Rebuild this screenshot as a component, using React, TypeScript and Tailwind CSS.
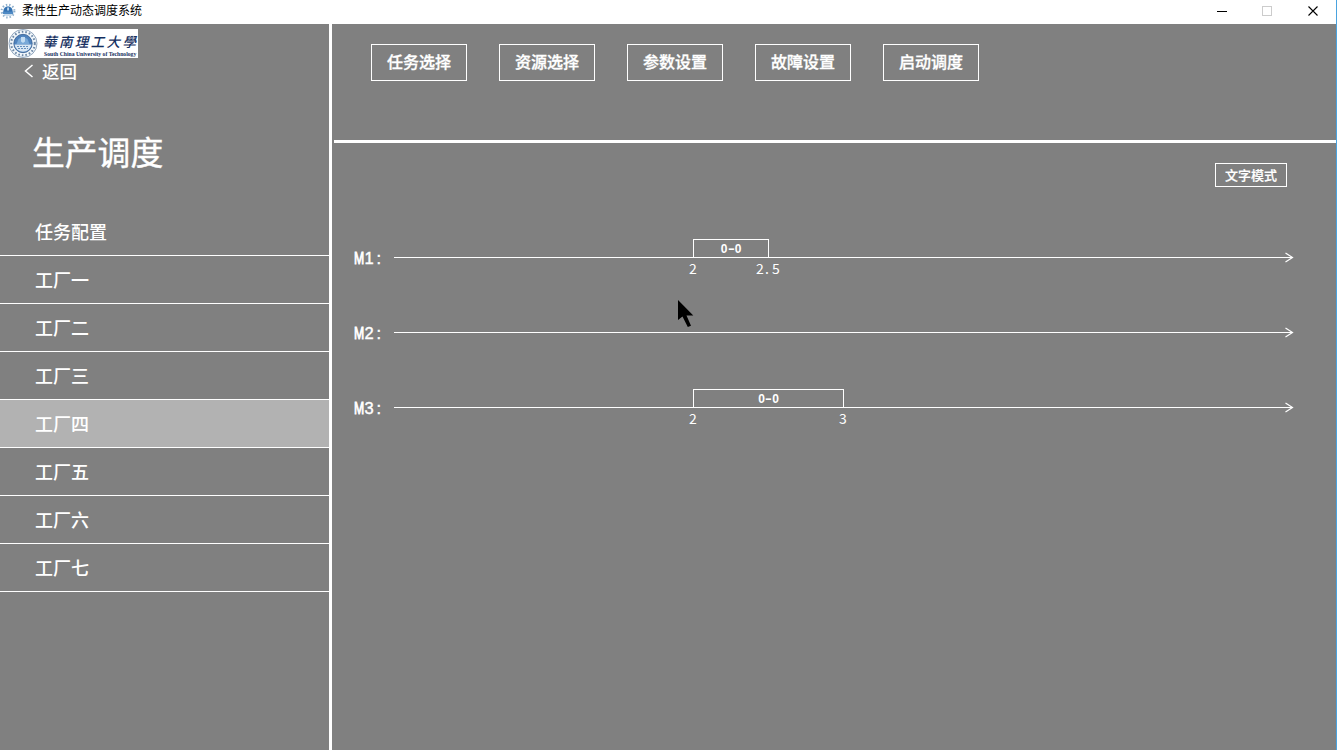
import React from "react";

const factories = ["任务配置", "工厂一", "工厂二", "工厂三", "工厂四", "工厂五", "工厂六", "工厂七"];
const actions = ["任务选择", "资源选择", "参数设置", "故障设置", "启动调度"];

type Job = { label: string; start: string; end: string; startX: number; width: number };
const machines: { name: string; job?: Job }[] = [
  { name: "M1", job: { label: "0-0", start: "2", end: "2.5", startX: 299, width: 76 } },
  { name: "M2" },
  { name: "M3", job: { label: "0-0", start: "2", end: "3", startX: 299, width: 151 } },
];

function AppIcon() {
  return (
    <svg width="16" height="16" viewBox="0 0 16 16" className="shrink-0">
      <circle cx="8" cy="8" r="6.4" fill="none" stroke="#8fb0cc" strokeWidth="2" strokeDasharray="1.4 2" />
      <circle cx="8" cy="8" r="5" fill="#e6f0f8" />
      <path d="M3.4 9C3.4 5 5.5 3.6 8 3.6S12.6 5 12.6 9z" fill="#3472b2" />
      <path d="M7.3 4.6h1.5v3H7.3z" fill="#dcecf8" />
      <path d="M2.8 8.6h10.4v2.4H2.8z" fill="#4f8ac4" />
      <path d="M4 12h8" stroke="#a9c4dc" />
    </svg>
  );
}

function Logo() {
  return (
    <div className="flex h-[29px] w-[130px] overflow-hidden bg-white text-[#152f60]">
      <svg width="31" height="29" viewBox="0 0 31 29" className="shrink-0">
        <circle cx="15" cy="14.5" r="14" fill="#f1f6fa" stroke="#7892ad" strokeWidth="0.8" />
        <circle cx="15" cy="14.5" r="11.8" fill="none" stroke="#6c87a5" strokeWidth="2" strokeDasharray="1.6 2" />
        <circle cx="15" cy="14.5" r="9.2" fill="#4f83bd" stroke="#355d91" strokeWidth="0.8" />
        <path d="M6.5 15.5h17a8.6 8.6 0 0 1-17 0z" fill="#d9e7f4" />
        <path d="M8.5 15l2-5 4.5-2.5 4.5 2.5 2 5z" fill="#79a9d8" />
        <path d="M13 8h4v4.5l-2 1.5-2-1.5z" fill="#c3dcf2" />
        <path d="M9 17.5h12M10 19.5h10" stroke="#658fbd" strokeDasharray="2 1" />
      </svg>
      <div className="flex w-[99px] flex-col pl-[4px]">
        <div className="flex h-[22px] items-center justify-between pr-[2px] pt-[1px] font-['Noto_Sans_CJK_TC',sans-serif] text-[13.5px] font-medium italic leading-[18px]">
          <span>華</span><span>南</span><span>理</span><span>工</span><span>大</span><span>學</span>
        </div>
        <div className="h-[7px] whitespace-nowrap pl-px font-['Liberation_Serif',serif] text-[5.7px] font-bold leading-[7px]">
          South China University of Technology
        </div>
      </div>
    </div>
  );
}

function TitleBar() {
  return (
    <header className="flex h-6 shrink-0 items-center justify-between bg-white">
      <div className="flex items-center gap-[6px] pb-[3px] text-xs leading-5 text-black">
        <AppIcon />
        <span className="-mt-px">柔性生产动态调度系统</span>
      </div>
      <svg width="136" height="24" viewBox="0 0 136 24" fill="none" shapeRendering="crispEdges">
        <path d="M17 11.5h10" stroke="#000" />
        <path d="M62.5 6.5h9v9h-9z" stroke="#ccc" />
        <path d="M108.5 6.5l9 9M117.5 6.5l-9 9" stroke="#000" strokeWidth="1.1" shapeRendering="auto" />
      </svg>
    </header>
  );
}

function Sidebar() {
  return (
    <aside className="flex w-[332px] shrink-0 flex-col border-r-[3px] border-white">
      <div className="flex h-[34px] pl-2 pt-[5px]">
        <Logo />
      </div>
      <button className="flex h-7 items-center gap-2 pb-[2px] pl-6 text-left text-[17.5px] font-medium leading-[26px]">
        <svg width="10" height="14" viewBox="0 0 10 14" fill="none" stroke="white" strokeWidth="1.5">
          <path d="M8.5 1L1.5 7l7 6" />
        </svg>
        <span>返回</span>
      </button>
      <h1 className="flex h-[122px] items-center pl-8 pt-[7px] text-[32.8px] font-normal [-webkit-text-stroke:0.4px_white]">
        生产调度
      </h1>
      <nav>
        {factories.map((name) => (
          <div
            key={name}
            className={
              name === "工厂四"
                ? "flex h-12 items-center border-b border-white bg-[#b2b2b2] pb-px pl-[35px] text-[18px] font-medium"
                : "flex h-12 items-center border-b border-white pb-px pl-[35px] text-[18px] font-medium"
            }
          >
            {name}
          </div>
        ))}
      </nav>
    </aside>
  );
}

function TimeMark({ value }: { value: string }) {
  return (
    <span className="flex font-['Noto_Sans_CJK_SC',sans-serif] text-[14px] font-normal leading-[20px]">
      {value.split("").map((c, i) => (
        <span key={i} className={c === "." ? "w-2 pl-[1px]" : "w-2 text-center"}>
          {c}
        </span>
      ))}
    </span>
  );
}

function Timeline({ name, job }: { name: string; job?: Job }) {
  return (
    <div className="flex h-[75px] items-start">
      <div className="flex w-10 shrink-0 pt-[7px] font-['Liberation_Sans',sans-serif] text-[16.5px] leading-6 [-webkit-text-stroke:0.4px_white]">
        <span className="w-[10.5px] origin-left scale-x-[0.74] [-webkit-text-stroke:0.9px_white]">{name[0]}</span>
        <span className="w-[10px]">{name[1]}</span>
        <span className="w-[9px] pl-[2px]">:</span>
      </div>
      <div className="relative h-full w-[900px]">
        <svg width="900" height="40" viewBox="0 0 900 40" fill="none" stroke="white">
          <path d="M0 18.5h898" shapeRendering="crispEdges" />
          <path d="M891.5 14l7 4.5-7 4.5" strokeWidth="1.2" />
        </svg>
        {job && (
          <div
            className="absolute top-0 flex h-[19px] items-center justify-center border border-white text-[12px] font-bold leading-none"
            style={{ left: job.startX, width: job.width }}
          >
            <span className="flex font-['Liberation_Sans',sans-serif]">
              <span className="w-[7px] text-center">{job.label[0]}</span>
              <span className="w-[7px] origin-center scale-x-[1.7] text-center">{job.label[1]}</span>
              <span className="w-[7px] text-center">{job.label[2]}</span>
            </span>
            <span className="absolute left-[-1px] top-[18px] -translate-x-1/2">
              <TimeMark value={job.start} />
            </span>
            <span className="absolute left-full top-[18px] -translate-x-1/2">
              <TimeMark value={job.end} />
            </span>
          </div>
        )}
      </div>
    </div>
  );
}

export default function App() {
  return (
    <div className="relative flex h-[750px] w-[1337px] flex-col overflow-hidden border-r border-[#4aa3df] bg-[#808080] font-['Noto_Sans_CJK_SC',sans-serif] text-white">
      <TitleBar />
      <div className="flex min-h-0 flex-1">
        <Sidebar />
        <main className="flex min-w-0 flex-1 flex-col pl-[2px]">
          <div className="flex h-[119px] shrink-0 gap-8 border-b-[3px] border-white pl-[37px] pt-5">
            {actions.map((label) => (
              <button
                key={label}
                className="h-[37px] w-24 border border-white pb-[2px] text-base font-medium leading-[33px] [-webkit-text-stroke:0.3px_white]"
              >
                {label}
              </button>
            ))}
          </div>
          <div className="flex justify-end pr-[49px] pt-5">
            <button className="h-6 w-[72px] border border-white text-[13px] font-medium leading-[22px] [-webkit-text-stroke:0.2px_white]">
              文字模式
            </button>
          </div>
          <section className="mt-[52px] pl-[20px]">
            {machines.map((m) => (
              <Timeline key={m.name} name={m.name} job={m.job} />
            ))}
          </section>
        </main>
      </div>
      <svg className="absolute left-[678px] top-[300px]" width="16" height="28" viewBox="0 0 16 28">
        <path d="M0 0v20l4.5-3.5 5.3 10.5 3.2-1.2L8.5 15.5h6.8z" fill="black" />
      </svg>
    </div>
  );
}
